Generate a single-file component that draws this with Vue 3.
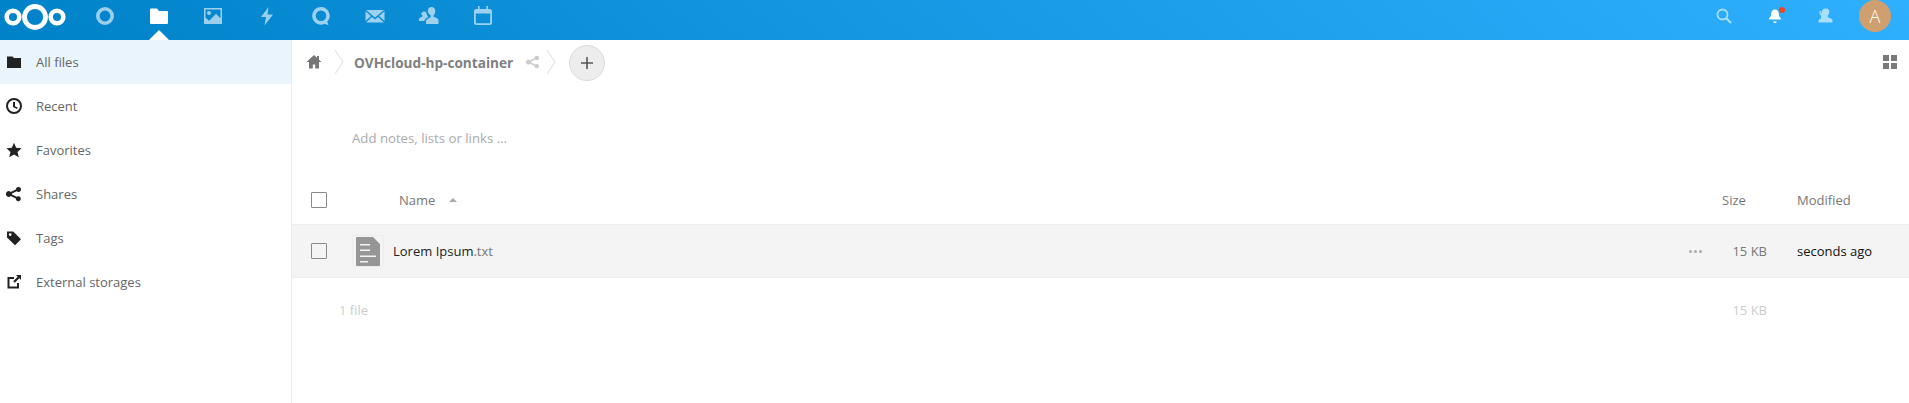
<template>
  <div class="page">
    <header class="topbar">
      <svg class="logo" width="62" height="26" viewBox="0 0 62 26">
        <g fill="none" stroke="#fff">
          <circle cx="9" cy="13" r="6.300" stroke-width="4.600" />
          <circle cx="31" cy="13" r="10.500" stroke-width="4.800" />
          <circle cx="53" cy="13" r="6.300" stroke-width="4.600" />
        </g>
      </svg>
      <nav class="apps">
        <a class="app" v-for="app in apps" :key="app.id" :class="{ active: app.id === 'files' }">
          <svg width="20" height="20" viewBox="0 0 20 20" fill="#fff">
            <path v-if="app.id === 'dash'" fill-rule="evenodd" d="M10 1a9 9 0 1 0 0 18 9 9 0 0 0 0-18zm0 3.600a5.400 5.400 0 1 1 0 10.800 5.400 5.400 0 0 1 0-10.800z" />
            <path v-if="app.id === 'files'" d="M1 3.500a1 1 0 0 1 1-1h6l2 2.500h8a1 1 0 0 1 1 1v11a1 1 0 0 1-1 1H2a1 1 0 0 1-1-1z" />
            <path v-if="app.id === 'photos'" fill-rule="evenodd" d="M1 2h18v16H1zm1.500 1.500v8.200l3.700 3 6.800-7 4.500 4.500V3.500zM6 5a2 2 0 1 1 0 4 2 2 0 0 1 0-4z" />
            <path v-if="app.id === 'activity'" d="M11.500 1 4 11h5L7.500 19.500 16 8.500h-5.500z" />
            <path v-if="app.id === 'talk'" fill-rule="evenodd" d="M10 1a8.800 8.800 0 1 0 3.700 16.800l3.800 1.500-1.200-3.500A8.800 8.800 0 0 0 10 1zm0 3.500a5.300 5.300 0 1 1 0 10.600 5.300 5.300 0 0 1 0-10.600z" />
            <path v-if="app.id === 'mail'" d="M1 4h18L10 11.500zM0.500 5.200 6 10l-5.500 5zM19.500 5.200 14 10l5.500 5zM7 11l3 2.500 3-2.500 6 5.500H1z" />
            <path v-if="app.id === 'contacts'" d="M12.500 1a3.800 3.800 0 0 1 3.800 4c0 2-1 3.600-1.800 4.500v1.300c1.600.6 5 1.500 5 3.700V18H7v-2.800c0-1.800 2.800-3.300 4.700-4V9.500C10.300 8.300 8.800 6.800 8.800 5A3.700 3.700 0 0 1 12.500 1zM5 5.500A3 3 0 0 1 7.300 6.500c.2 1.500 1 3.200 2 4.400-2 1-3.800 2.300-3.800 4.100H0v-2c0-1.300 2.300-2 3.500-2.600V9.500C2.800 8.800 2 7.800 2 7.800S3.300 5.500 5 5.500z" />
            <path v-if="app.id === 'calendar'" fill-rule="evenodd" d="M5 0h1.600v3h6.800V0H15v3h1.500A2.500 2.500 0 0 1 19 5.500v11a2.500 2.500 0 0 1-2.500 2.500h-13A2.500 2.500 0 0 1 1 16.500v-11A2.500 2.500 0 0 1 3.500 3H5zM2.800 7.500v9c0 .4.300.7.700.7h13c.4 0 .7-.3.700-.7v-9z" />
          </svg>
        </a>
      </nav>
      <div class="right">
        <svg class="hicon dim" width="16" height="16" viewBox="0 0 16 16" fill="none" stroke="#fff" stroke-width="1.800">
          <circle cx="6.500" cy="6.500" r="5" />
          <path d="M10.200 10.200 15 15" stroke-width="2.200" />
        </svg>
        <span class="bell">
          <svg width="14" height="16" viewBox="0 0 14 16" fill="#fff">
            <path d="M7 1.500c2.500 0 3.600 2 3.800 4.200.2 2.300.8 3.400 2.200 4.600v1.200H1v-1.200c1.400-1.200 2-2.300 2.200-4.600C3.400 3.500 4.500 1.500 7 1.500zM5 13.500h4L7.800 15H6.200z" />
          </svg>
          <i class="dot"></i>
        </span>
        <svg class="hicon dim" width="16" height="16" viewBox="0 0 16 16" fill="#fff">
          <path d="M9 0.500a3.300 3.300 0 0 1 3.300 3.500c0 1.700-.9 3-1.500 3.800v1.400c1.300.5 4.700 1.300 4.700 3V14.500H1.500V13c0-1 1-1.800 2.500-2.400V7.500L2.500 6V3h1.300v2.500h.8V3l.6-.3A3.400 3.400 0 0 1 9 0.500z" />
        </svg>
        <span class="avatar">A</span>
      </div>
    </header>

    <div class="body">
      <aside class="sidebar">
        <a class="nav-item" v-for="item in navItems" :key="item.id" :class="{ active: item.id === 'all' }">
          <svg width="16" height="16" viewBox="0 0 16 16" fill="#222">
            <path v-if="item.id === 'all'" d="M1 2.500h5.500L8 4h7v10H1z" />
            <path v-if="item.id === 'recent'" fill-rule="evenodd" d="M8 0a8 8 0 1 0 0 16A8 8 0 0 0 8 0zm0 2a6 6 0 1 1 0 12A6 6 0 0 1 8 2zM7 4v5l4 2 .7-1.400L9 8.300V4z" />
            <path v-if="item.id === 'fav'" d="m8 .8 2.200 5 5.400.5-4.100 3.600 1.300 5.300L8 12.400l-4.800 2.800 1.300-5.300L.4 6.300l5.400-.5z" />
            <path v-if="item.id === 'shares'" d="M12.500 1a2.500 2.500 0 1 1-1.800 4.200L6 7.500v1l4.700 2.300a2.500 2.500 0 1 1-.9 1.700L4.700 10a2.800 2.800 0 1 1 0-4l5.100-2.500A2.500 2.500 0 0 1 12.500 1z" />
            <path v-if="item.id === 'tags'" fill-rule="evenodd" d="M1 1.500h6.200L15 9.300 9 15.300 1 7.500zM4.200 3.200a1.400 1.400 0 1 0 0 2.800 1.400 1.400 0 0 0 0-2.800z" />
            <path v-if="item.id === 'external'" d="M1.500 3H8v2H3.500v7.500H11V9h2v5.500H1.500zM10 1h5v5l-1.700-1.700-4.500 4.500-1.600-1.600 4.500-4.500z" />
          </svg>
          <span>{{ item.label }}</span>
        </a>
      </aside>

      <main class="content">
        <div class="toolbar">
          <svg class="home" width="16" height="16" viewBox="0 0 16 16" fill="#777">
            <path d="M8 1 0.500 8H3v6.500h3.800V10.500h2.400v4H13V8h2.500L13 5.700V2h-2v1.800z" />
          </svg>
          <svg class="crumb" width="10" height="44" viewBox="0 0 10 44" fill="none" stroke="#ddd">
            <path d="M1 10 9 22 1 34" />
          </svg>
          <span class="folder">OVHcloud-hp-container</span>
          <svg class="share" width="14" height="14" viewBox="0 0 16 16" fill="#ccc">
            <path d="M12.500 1a2.500 2.500 0 1 1-1.800 4.200L6 7.500v1l4.700 2.300a2.500 2.500 0 1 1-.9 1.700L4.700 10a2.800 2.800 0 1 1 0-4l5.100-2.500A2.500 2.500 0 0 1 12.500 1z" />
          </svg>
          <svg class="crumb crumb-last" width="10" height="44" viewBox="0 0 10 44" fill="none" stroke="#ddd">
            <path d="M1 10 9 22 1 34" />
          </svg>
          <button class="add">
            <svg width="14" height="14" viewBox="0 0 14 14" fill="#555"><path d="M6.200 1h1.600v5.200H13v1.600H7.800V13H6.200V7.800H1V6.200h5.200z" /></svg>
          </button>
          <span class="grid-toggle"><i></i><i></i><i></i><i></i></span>
        </div>

        <div class="notes">Add notes, lists or links …</div>

        <div class="row head">
          <div class="check-cell"><span class="check"></span></div>
          <div class="name-cell">
            <span>Name</span>
            <i class="sort"></i>
          </div>
          <div class="size-cell">Size</div>
          <div class="date-cell">Modified</div>
        </div>

        <div class="row file">
          <div class="check-cell"><span class="check"></span></div>
          <div class="thumb">
            <svg width="24" height="29" viewBox="0 0 24 29">
              <path fill="#969696" d="M1 0h16l7 7v21a1 1 0 0 1-1 1H1a1 1 0 0 1-1-1V1a1 1 0 0 1 1-1z" />
              <path fill="#f4f4f4" d="M4 7h10v1.500H4zM4 12.500h10V14H4zM4 18.500h16V20H4zM4 24h8v1.500H4z" />
            </svg>
          </div>
          <div class="file-name">Lorem Ipsum<span class="ext">.txt</span></div>
          <div class="dots"><i></i><i></i><i></i></div>
          <div class="size-val">15 KB</div>
          <div class="date-val">seconds ago</div>
        </div>

        <div class="row summary">
          <div class="count">1 file</div>
          <div class="size-val">15 KB</div>
        </div>
      </main>
    </div>
  </div>
</template>

<script setup>
const apps = [
  { id: 'dash' },
  { id: 'files' },
  { id: 'photos' },
  { id: 'activity' },
  { id: 'talk' },
  { id: 'mail' },
  { id: 'contacts' },
  { id: 'calendar' }
]

const navItems = [
  { id: 'all', label: 'All files' },
  { id: 'recent', label: 'Recent' },
  { id: 'fav', label: 'Favorites' },
  { id: 'shares', label: 'Shares' },
  { id: 'tags', label: 'Tags' },
  { id: 'external', label: 'External storages' }
]
</script>

<style>
html,
body {
  margin: 0;
  background: #fff;
  overflow: hidden;
}
</style>

<style scoped>
.page {
  width: 1909px;
  height: 403px;
  display: flex;
  flex-direction: column;
  font-family: 'Open Sans', 'Liberation Sans', sans-serif;
  font-size: 13px;
  color: #555;
}

.topbar {
  height: 40px;
  flex: none;
  display: flex;
  align-items: center;
  background: linear-gradient(40deg, #0082c9 0%, #2eb0ff 100%);
}

.logo {
  margin: 0 0 7px 4px;
  flex: none;
}

.apps {
  display: flex;
  margin-left: 12px;
}

.app {
  width: 54px;
  height: 40px;
  display: flex;
  align-items: center;
  justify-content: center;
  position: relative;
  padding-bottom: 9px;
  box-sizing: border-box;
  opacity: 0.6;
}

.app.active {
  opacity: 1;
}

.app.active::after {
  content: '';
  position: absolute;
  bottom: 0;
  left: 17px;
  border: 10px solid transparent;
  border-top: 0;
  border-bottom-color: #fff;
}

.right {
  margin-left: auto;
  display: flex;
  align-items: center;
  height: 40px;
  padding-bottom: 8px;
  box-sizing: border-box;
}

.hicon.dim {
  opacity: 0.6;
}

.bell {
  position: relative;
  display: flex;
  margin-left: 36px;
}

.dot {
  position: absolute;
  top: -1px;
  right: -3px;
  width: 6px;
  height: 6px;
  border-radius: 50%;
  background: #f4441c;
}

.bell + .hicon {
  margin-left: 35px;
}

.avatar {
  width: 32px;
  height: 32px;
  margin: 0 18px 0 26px;
  border-radius: 50%;
  background: #cf9f6f;
  color: #fff;
  font-size: 18px;
  font-weight: 300;
  line-height: 32px;
  text-align: center;
}

.body {
  flex: 1;
  display: flex;
  min-height: 0;
}

.sidebar {
  width: 292px;
  flex: none;
  border-right: 1px solid #ededed;
  box-sizing: border-box;
}

.nav-item {
  height: 44px;
  display: flex;
  align-items: center;
  padding-left: 6px;
  color: #666;
}

.nav-item span {
  margin-left: 14px;
}

.nav-item.active {
  background: #e9f4fc;
}

.content {
  flex: 1;
  min-width: 0;
}

.toolbar {
  height: 44px;
  display: flex;
  align-items: center;
  padding-left: 14px;
  padding-right: 12px;
  position: relative;
}

.crumb {
  margin-left: 12px;
}

.folder {
  margin-left: 10px;
  font-size: 13.600px;
  font-weight: 700;
  color: #808080;
}

.share {
  margin-left: 13px;
}

.crumb-last {
  margin-left: 6px;
}

.add {
  width: 36px;
  height: 36px;
  margin: 2px 0 0 13px;
  padding: 0;
  border: 1px solid #dbdbdb;
  border-radius: 50%;
  background: #ededed;
  display: flex;
  align-items: center;
  justify-content: center;
}

.grid-toggle {
  margin-left: auto;
  display: grid;
  grid-template-columns: 6px 6px;
  gap: 2px;
}

.grid-toggle i {
  width: 6px;
  height: 6px;
  background: #7a7a7a;
}

.notes {
  height: 91px;
  box-sizing: border-box;
  padding: 43px 0 0 60px;
  font-size: 13.200px;
  line-height: 22px;
  color: #aaa;
}

.row {
  display: flex;
  align-items: center;
  border-bottom: 1px solid #ededed;
  box-sizing: border-box;
}

.head {
  height: 50px;
  color: #777;
}

.check-cell {
  width: 58px;
  padding-left: 19px;
  box-sizing: border-box;
  flex: none;
  display: flex;
}

.check {
  width: 16px;
  height: 16px;
  box-sizing: border-box;
  border: 1px solid #8a8a8a;
  border-radius: 1px;
}

.name-cell {
  flex: 1;
  margin-left: 49px;
  display: flex;
  align-items: center;
}

.sort {
  margin-left: 14px;
  border: 4px solid transparent;
  border-top: 0;
  border-bottom-color: #aaa;
}

.size-cell {
  width: 75px;
  flex: none;
}

.date-cell {
  width: 112px;
  flex: none;
}

.file {
  height: 53px;
  background: #f4f4f4;
}

.thumb {
  width: 32px;
  height: 32px;
  margin-left: 2px;
  flex: none;
  box-sizing: border-box;
  border: 1px solid #ececec;
  border-radius: 3px;
  display: flex;
  align-items: center;
  justify-content: center;
}

.file-name {
  flex: 1;
  margin-left: 9px;
  color: #222;
}

.ext {
  color: #777;
}

.dots {
  display: flex;
  gap: 2px;
  margin-right: 30px;
}

.dots i {
  width: 3px;
  height: 3px;
  border-radius: 50%;
  background: #aaa;
}

.size-val {
  width: 35px;
  flex: none;
  text-align: right;
  white-space: nowrap;
  color: #777;
}

.date-val {
  width: 112px;
  flex: none;
  margin-left: 30px;
  color: #111;
}

.summary {
  height: 64px;
  border-bottom: 0;
  color: #ccc;
}

.count {
  flex: 1;
  margin-left: 47px;
}

.summary .size-val {
  color: #ccc;
  margin-right: 142px;
}
</style>
